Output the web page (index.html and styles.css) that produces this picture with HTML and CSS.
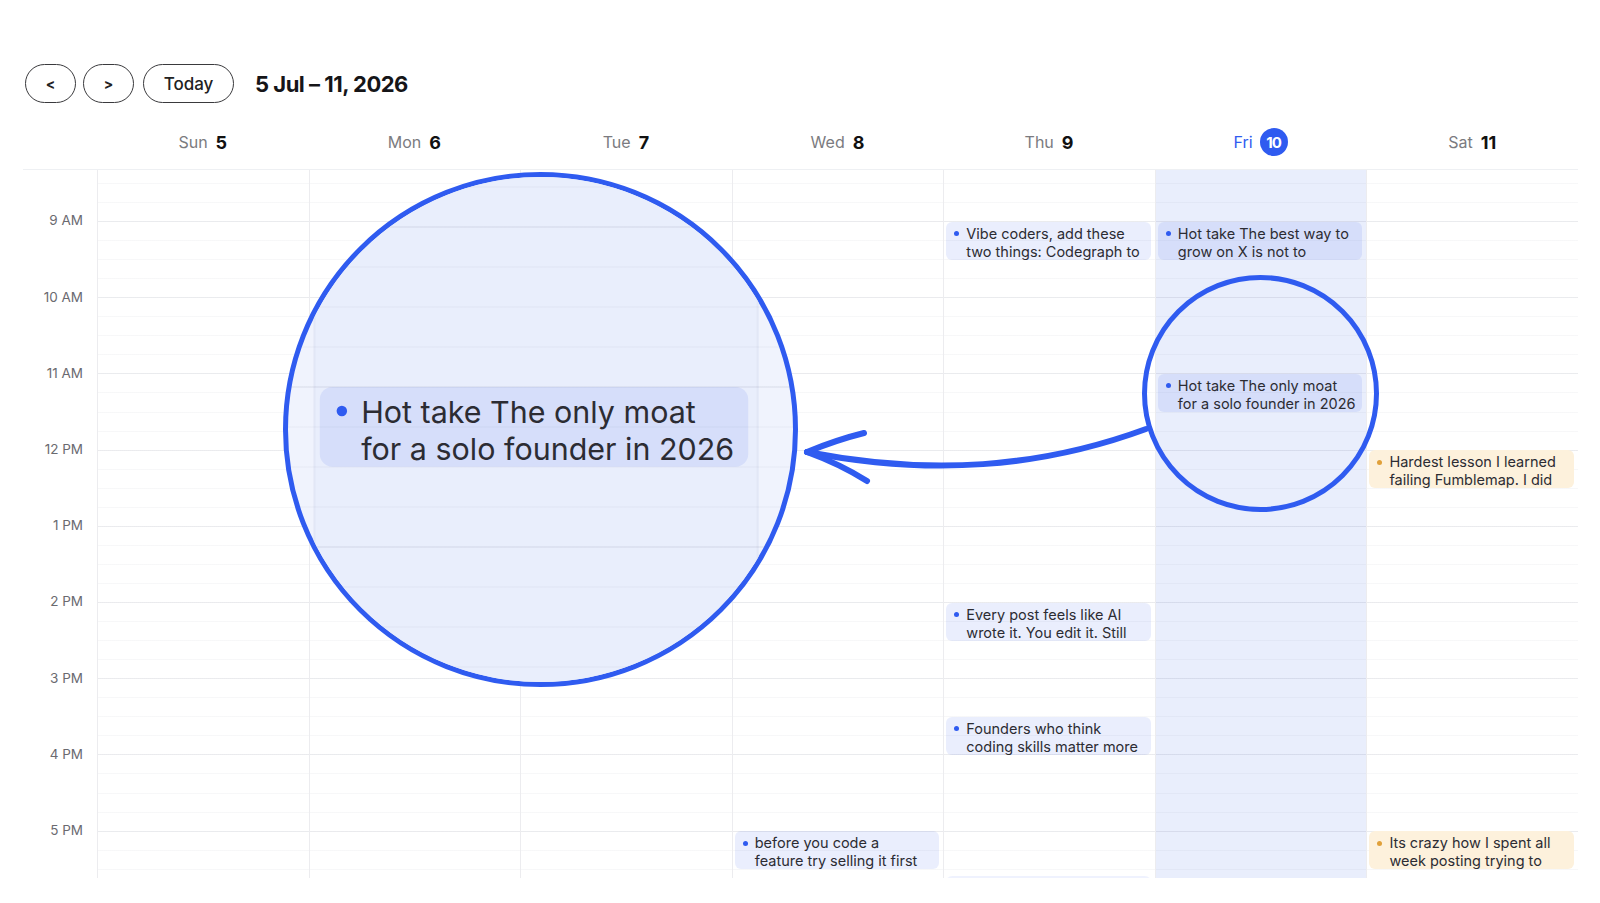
FILE: index.html
```html
<!DOCTYPE html>
<html lang="en">
<head>
<meta charset="utf-8">
<title>Week · 5 Jul – 11, 2026</title>
<link rel="stylesheet" href="styles.css">
</head>
<body>
<div class="page">
  <div class="toolbar">
    <button class="nav-btn" aria-label="Previous week">&lt;</button>
    <button class="nav-btn" aria-label="Next week">&gt;</button>
    <button class="today-btn">Today</button>
    <h1 class="range">5 Jul – 11, 2026</h1>
  </div>

  <div class="week-head">
    <div class="gutter-head"></div>
    <div class="day-head"><span class="dow">Sun</span><span class="dom">5</span></div>
    <div class="day-head"><span class="dow">Mon</span><span class="dom">6</span></div>
    <div class="day-head"><span class="dow">Tue</span><span class="dom">7</span></div>
    <div class="day-head"><span class="dow">Wed</span><span class="dom">8</span></div>
    <div class="day-head"><span class="dow">Thu</span><span class="dom">9</span></div>
    <div class="day-head is-today"><span class="dow">Fri</span><span class="dom">10</span></div>
    <div class="day-head"><span class="dow">Sat</span><span class="dom">11</span></div>
  </div>

  <div class="week-body">
    <div class="hours">
      <div class="hour">9 AM</div>
      <div class="hour">10 AM</div>
      <div class="hour">11 AM</div>
      <div class="hour">12 PM</div>
      <div class="hour">1 PM</div>
      <div class="hour">2 PM</div>
      <div class="hour">3 PM</div>
      <div class="hour">4 PM</div>
      <div class="hour">5 PM</div>
    </div>

    <div class="day"></div>
    <div class="day"></div>
    <div class="day"></div>

    <div class="day">
      <div class="event" style="top:661.1px"><span class="dot"></span><span class="title">before you code a<br>feature try selling it first</span></div>
    </div>

    <div class="day">
      <div class="event" style="top:51.5px"><span class="dot"></span><span class="title">Vibe coders, add these two things: Codegraph to</span></div>
      <div class="event" style="top:432.5px"><span class="dot"></span><span class="title">Every post feels like AI wrote it. You edit it. Still</span></div>
      <div class="event" style="top:546.8px"><span class="dot"></span><span class="title">Founders who think coding skills matter more</span></div>
      <div class="event event-peek" style="top:706px"></div>
    </div>

    <div class="day is-today">
      <div class="event" style="top:51.5px"><span class="dot"></span><span class="title">Hot take The best way to grow on X is not to</span></div>
      <div class="event" style="top:203.9px"><span class="dot"></span><span class="title">Hot take The only moat for a solo founder in 2026</span></div>
    </div>

    <div class="day">
      <div class="event warm" style="top:280.1px"><span class="dot"></span><span class="title">Hardest lesson I learned failing Fumblemap. I did</span></div>
      <div class="event warm" style="top:661.1px"><span class="dot"></span><span class="title">Its crazy how I spent all week posting trying to</span></div>
    </div>
  </div>
</div>

<!-- magnifier: enlarged view of Friday 11 AM -->
<div class="lens lens-big">
  <div class="lens-view">
    <div class="lens-col">
      <div class="event" style="top:108.9px"><span class="dot"></span><span class="title">Hot take The only moat for a solo founder in 2026</span></div>
    </div>
  </div>
</div>
<div class="lens lens-small"></div>

<svg class="pointer" width="1600" height="903" viewBox="0 0 1600 903" aria-hidden="true">
  <path d="M1146 429 C 1040 468, 930 476, 807 452" />
  <path d="M864 433 Q 836 440 807 452" />
  <path d="M807 452 Q 840 464 867 481" />
</svg>
</body>
</html>
```

FILE: styles.css
```css
:root {
  --blue: #2f5bf0;
  --today-bg: #e9eefc;
  --line-q: rgba(30, 40, 70, 0.035);
  --line-h: rgba(30, 40, 70, 0.06);
  --lens-line-q: rgba(30, 40, 70, 0.025);
  --lens-line-h: rgba(30, 40, 70, 0.035);
  --col-line: #ececef;
  --hour-h: 76.2px;
}

* { box-sizing: border-box; }

html, body {
  margin: 0;
  background: #fff;
}

body {
  position: relative;
  height: 903px;
  overflow: hidden;
  font-family: Inter, "Noto Sans", "Liberation Sans", sans-serif;
  color: #1b1b1f;
}

.page {
  padding: 64px 22px 0 23px;
}

/* ---------- toolbar ---------- */
.toolbar {
  display: flex;
  align-items: center;
  height: 39px;
  margin-left: 2px;
}

.nav-btn,
.today-btn {
  height: 39px;
  padding: 0;
  border: 1.5px solid #3a3a3d;
  border-radius: 999px;
  background: #fff;
  color: #222;
  font-family: inherit;
}

.nav-btn {
  width: 51px;
  margin-right: 7px;
  font-size: 14px;
  font-weight: 700;
}

.today-btn {
  width: 91px;
  margin-left: 2px;
  margin-right: 21px;
  font-size: 17px;
  font-weight: 500;
}

.range {
  margin: 0;
  font-size: 22px;
  font-weight: 700;
  letter-spacing: -0.5px;
  color: #151518;
}

/* ---------- day header ---------- */
.week-head {
  display: grid;
  grid-template-columns: 74px repeat(7, 1fr);
  height: 67px;
  border-bottom: 1px solid #eef0f3;
}

.day-head {
  display: flex;
  align-items: center;
  justify-content: center;
  gap: 8px;
  padding-top: 12px;
}

.dow {
  font-size: 16px;
  color: #7b7b80;
}

.dom {
  font-size: 18px;
  font-weight: 700;
  color: #111;
}

.is-today.day-head { gap: 7px; }
.is-today .dow { color: var(--blue); }
.is-today .dom {
  display: flex;
  align-items: center;
  justify-content: center;
  width: 28px;
  height: 28px;
  border-radius: 50%;
  background: var(--blue);
  color: #fff;
  font-size: 15px;
  letter-spacing: -0.8px;
}

/* ---------- time grid ---------- */
.week-body {
  display: grid;
  grid-template-columns: 74px repeat(7, 1fr);
  height: 708px;
  overflow: hidden;
}

.hours {
  padding-top: 12.4px;
}

.hour {
  display: flex;
  align-items: center;
  justify-content: flex-end;
  height: var(--hour-h);
  padding-right: 14px;
  font-size: 13.5px;
  color: #6a6a70;
}

.day {
  position: relative;
  border-left: 1px solid var(--col-line);
  background-image:
    repeating-linear-gradient(to bottom,
      var(--line-h) 51px, var(--line-h) 52px,
      transparent 52px, transparent 127.2px),
    repeating-linear-gradient(to bottom,
      var(--line-q) 12.9px, var(--line-q) 13.9px,
      transparent 13.9px, transparent 31.95px);
}

.day.is-today {
  background-color: var(--today-bg);
}

/* ---------- events ---------- */
.event {
  position: absolute;
  left: 2px;
  right: 4px;
  height: 38.1px;
  display: flex;
  gap: 7px;
  padding: 3px 3px 0 8px;
  border-radius: 6px;
  background: rgba(47, 91, 240, 0.1);
  color: #2c2c33;
  font-size: 14.5px;
  line-height: 18.3px;
  overflow: hidden;
}

.event-peek {
  background: rgba(47, 91, 240, 0.08);
}

.dot {
  flex: none;
  width: 5px;
  height: 5px;
  margin-top: 6.5px;
  border-radius: 50%;
  background: var(--blue);
}

.event.warm { background: #fdf1dc; }
.event.warm .dot { background: #e0a03a; }

/* ---------- magnifier ---------- */
.lens {
  position: absolute;
  border: 5px solid var(--blue);
  border-radius: 50%;
}

.lens-big {
  left: 283px;
  top: 172px;
  width: 515px;
  height: 515px;
  overflow: hidden;
  background: #f0f3fd;
}

.lens-view {
  position: absolute;
  left: -26.6px;
  top: -18.9px;
  width: 270px;
  height: 260px;
  transform: scale(2.1);
  transform-origin: 0 0;
  background-image:
    repeating-linear-gradient(to bottom,
      var(--lens-line-h) 32.2px, var(--lens-line-h) 33.2px,
      transparent 33.2px, transparent 108.4px),
    repeating-linear-gradient(to bottom,
      var(--lens-line-q) 13.15px, var(--lens-line-q) 14.15px,
      transparent 14.15px, transparent 32.2px);
}

.lens-col {
  position: absolute;
  left: 24.7px;
  top: 0;
  width: 212px;
  height: 100%;
  background-color: var(--today-bg);
  background-image: inherit;
  border-left: 1px solid rgba(30, 40, 70, 0.03);
  border-right: 1px solid rgba(30, 40, 70, 0.03);
}

.lens-small {
  left: 1142px;
  top: 275px;
  width: 237px;
  height: 237px;
}

.pointer {
  position: absolute;
  left: 0;
  top: 0;
  pointer-events: none;
}

.pointer path {
  fill: none;
  stroke: var(--blue);
  stroke-width: 6;
  stroke-linecap: round;
  stroke-linejoin: round;
}
```
